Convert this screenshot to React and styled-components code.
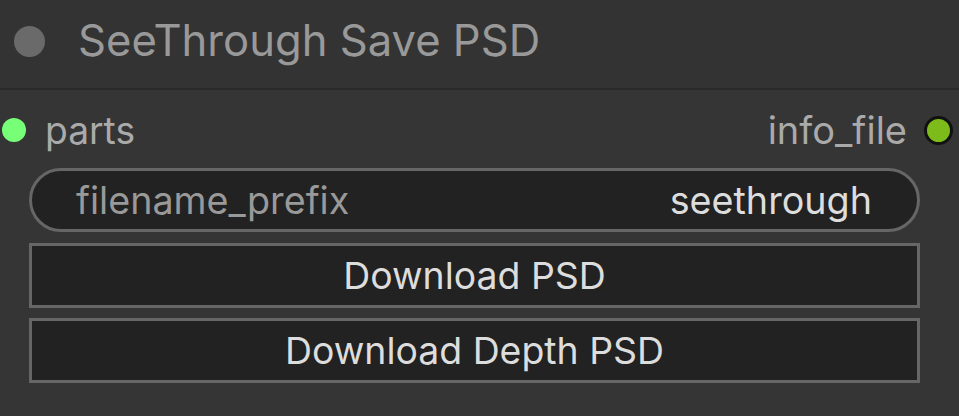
import React from "react";
import styled, { createGlobalStyle } from "styled-components";

const Global = createGlobalStyle`
  html, body { margin: 0; padding: 0; background: #353535; }
  body { font-family: Inter, "Noto Sans", sans-serif; }
`;

const Node = styled.div`
  width: 959px;
  height: 416px;
  background: #353535;
  display: flex;
  flex-direction: column;
  overflow: hidden;
`;

const Header = styled.div`
  height: 82px;
  padding: 0 0 6px 14px;
  background: #333333;
  border-bottom: 2px solid #2a2a2a;
  display: flex;
  align-items: center;
  gap: 33px;
  box-sizing: content-box;
`;

const Dot = styled.span`
  width: 31px;
  height: 31px;
  border-radius: 50%;
  background: #6a6a6a;
  flex: none;
`;

const Title = styled.div`
  color: #999999;
  font-size: 43.6px;
  line-height: 1;
`;

const Body = styled.div`
  display: flex;
  flex-direction: column;
  padding: 10px 39px 0 29px;
`;

const SlotRow = styled.div`
  height: 60px;
  display: flex;
  align-items: center;
  justify-content: space-between;
  margin: 0 -33px 0 -27px;
`;

const Slot = styled.div`
  display: flex;
  align-items: center;
  gap: ${(p) => p.$gap}px;
  color: #aaaaaa;
  font-size: ${(p) => p.$size}px;
`;

const SlotDot = styled.span`
  width: ${(p) => p.$size}px;
  height: ${(p) => p.$size}px;
  border-radius: 50%;
  background: ${(p) => p.$color};
  border: ${(p) => (p.$outlined ? "3px solid #111" : "none")};
  box-sizing: border-box;
  flex: none;
`;

const TextWidget = styled.div`
  margin-top: 8px;
  height: 64px;
  box-sizing: border-box;
  border: 3px solid #666666;
  border-radius: 32px;
  background: #222222;
  display: flex;
  align-items: center;
  justify-content: space-between;
  padding: 0 45px 0 44px;
  font-size: 37.7px;
`;

const Label = styled.span`
  color: #999999;
`;

const Value = styled.span`
  color: #dddddd;
`;

const Button = styled.div`
  margin-top: ${(p) => p.$mt}px;
  height: 65px;
  box-sizing: border-box;
  border: 3px solid #666666;
  background: #222222;
  display: flex;
  align-items: center;
  justify-content: center;
  color: #dddddd;
  font-size: 37.4px;
`;

export default function App() {
  return (
    <>
      <Global />
      <Node>
        <Header>
          <Dot />
          <Title>SeeThrough Save PSD</Title>
        </Header>
        <Body>
          <SlotRow>
            <Slot $gap={19} $size={37.2}>
              <SlotDot $size={24} $color="#77ff77" />
              parts
            </Slot>
            <Slot $gap={17} $size={38}>
              info_file
              <SlotDot $size={29} $color="#7cbb1a" $outlined />
            </Slot>
          </SlotRow>
          <TextWidget>
            <Label>filename_prefix</Label>
            <Value>seethrough</Value>
          </TextWidget>
          <Button $mt={11}>Download PSD</Button>
          <Button $mt={10}>Download Depth PSD</Button>
        </Body>
      </Node>
    </>
  );
}
